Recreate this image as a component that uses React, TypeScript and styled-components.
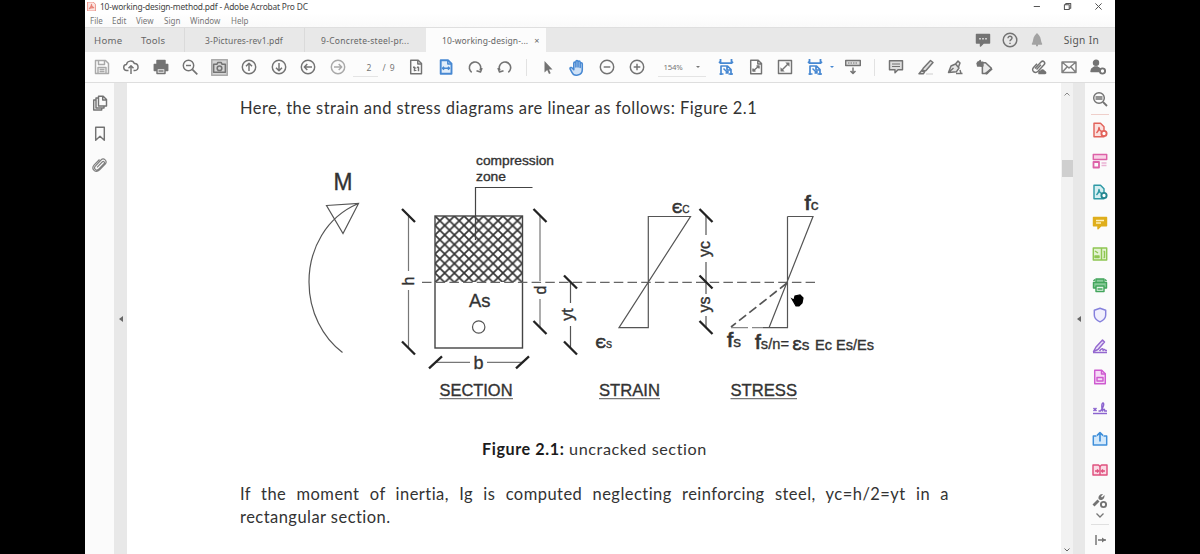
import React from "react";
import styled, { createGlobalStyle } from "styled-components";

const Global = createGlobalStyle`
  * { box-sizing: border-box; }
  body { margin: 0; background: #000; font-family: "Noto Sans", "Open Sans", sans-serif; }
`;

const GREY = "#737373";
const BLUE = "#4788d2";

const Screen = styled.div`
  display: flex;
  justify-content: center;
  width: 1200px;
  height: 554px;
  overflow: hidden;
  background: #000;
`;
const Window = styled.div`
  display: flex;
  flex-direction: column;
  width: 1030px;
  height: 554px;
  background: #fff;
`;
const TitleBar = styled.header`
  display: flex;
  align-items: center;
  height: 13px;
  padding: 0 11px 0 2px;
`;
const Title = styled.span`
  margin-left: 4px;
  font-size: 8.4px;
  letter-spacing: -0.18px;
  color: #444;
  white-space: nowrap;
  flex: 1;
`;
const WindowButtons = styled.div`
  display: flex;
  gap: 20px;
`;
const MenuBar = styled.nav`
  display: flex;
  height: 14px;
  padding-left: 5px;
  align-items: center;
  font-size: 8px;
  color: #777;
  background: linear-gradient(#fff, #fafafa);
`;
const MenuItem = styled.span<{ $w: number }>`
  width: ${(p) => p.$w}px;
  white-space: nowrap;
`;
const TabBar = styled.div`
  display: flex;
  height: 25px;
  background: #e8e8e8;
  border-top: 1px solid #dfdfdf;
`;
const Tab = styled.div<{ $w: number; $pad: number; $active?: boolean; $line?: boolean; $size?: number; $ls?: number }>`
  display: flex;
  align-items: center;
  width: ${(p) => p.$w}px;
  padding-left: ${(p) => p.$pad}px;
  font-size: ${(p) => p.$size ?? 8.5}px;
  letter-spacing: ${(p) => p.$ls ?? 0}px;
  color: #666;
  white-space: nowrap;
  background: ${(p) => (p.$active ? "#fcfcfc" : "transparent")};
  border-left: 1px solid ${(p) => (p.$line ? "#dadada" : "transparent")};
`;
const CloseMark = styled.span`
  margin-left: 6px;
  font-size: 9px;
`;
const Account = styled.div`
  display: flex;
  align-items: center;
  margin-left: auto;
  padding-right: 16px;
  font-size: 10.2px;
  letter-spacing: 0.3px;
  color: #555;
`;
const AccountSlot = styled.span<{ $w: number }>`
  display: flex;
  width: ${(p) => p.$w}px;
`;
const Toolbar = styled.div`
  display: flex;
  align-items: center;
  height: 31px;
  padding-left: 2px;
  background: #fcfcfc;
  border-bottom: 1px solid #dedede;
`;
const Slot = styled.span<{ $before?: number }>`
  display: flex;
  justify-content: center;
  flex: none;
  width: 29.5px;
  margin-left: ${(p) => p.$before ?? 0}px;
`;
const Divider = styled.span`
  width: 1px;
  height: 17px;
  margin: 0 6.5px;
  background: #e2e2e2;
`;
const PageBox = styled.span`
  display: flex;
  align-items: center;
  width: 49px;
  height: 19px;
  font-size: 8.5px;
  color: #777;
`;
const PageField = styled.span`
  width: 25px;
  height: 19px;
  padding-left: 14px;
  line-height: 19px;
  border-bottom: 1px solid #e4e4e4;
`;
const PageTotal = styled.span`
  margin-left: 5px;
  letter-spacing: 1px;
`;
const ZoomBox = styled.span`
  display: flex;
  align-items: center;
  justify-content: space-between;
  width: 48px;
  height: 19px;
  margin: 0 6px;
  padding: 0 6px 0 6px;
  font-size: 7.8px;
  letter-spacing: -0.2px;
  color: #777;
  border-bottom: 1px solid #e4e4e4;
`;
const Caret = styled.i<{ $c?: string }>`
  border: 2px solid transparent;
  border-top: 2.5px solid ${(p) => p.$c ?? "#777"};
  border-bottom: 0;
`;
const Workspace = styled.div`
  display: flex;
  flex: 1;
  min-height: 0;
`;
const NavPane = styled.aside`
  display: flex;
  flex-direction: column;
  align-items: center;
  gap: 15px;
  width: 29px;
  padding-top: 12px;
  background: #fbfbfb;
`;
const Rail = styled.div<{ $w: number }>`
  display: flex;
  align-items: center;
  justify-content: center;
  width: ${(p) => p.$w}px;
  background: #e8e8e8;
`;
const RailArrow = styled.i`
  border: 3px solid transparent;
  border-right: 4px solid #666;
  border-left: 0;
`;
const Page = styled.main`
  display: flex;
  flex-direction: column;
  flex: 1;
  padding: 13px 0 0 113px;
  font-family: Lato, sans-serif;
  color: #333;
`;
const Lead = styled.p`
  margin: 0;
  height: 24px;
  line-height: 24px;
  font-size: 16.5px;
  letter-spacing: 0.46px;
  white-space: nowrap;
`;
const Figure = styled.figure`
  display: flex;
  flex-direction: column;
  margin: 20px 0 0;
`;
const Caption = styled.figcaption`
  margin: 27px 0 0 242px;
  height: 24px;
  line-height: 24px;
  font-size: 16.2px;
  letter-spacing: 0.57px;
  white-space: nowrap;
  b { color: #1c1c1c; }
`;
const Paragraph = styled.p`
  width: 709px;
  margin: 22px 0 0;
  line-height: 23px;
  font-size: 16.5px;
  letter-spacing: 0.46px;
  text-align: justify;
`;
const ScrollTrack = styled.div`
  display: flex;
  flex-direction: column;
  align-items: center;
  justify-content: space-between;
  width: 12px;
  background: #f2f2f2;
  padding: 8px 0 1px;
`;
const Thumb = styled.div`
  width: 11px;
  height: 17px;
  margin: 63px 0 auto;
  background: #cfcfcf;
`;
const ToolPane = styled.aside`
  display: flex;
  flex-direction: column;
  align-items: center;
  width: 30px;
  background: #fbfbfb;
`;
const ToolCell = styled.span<{ $h?: number }>`
  display: flex;
  align-items: center;
  justify-content: center;
  flex: none;
  height: ${(p) => p.$h ?? 30.85}px;
`;
const Chevron = styled.svg`
  flex: none;
  margin: -4px 0 5px;
`;
const Rule = styled.span`
  flex: none;
  width: 18px;
  height: 1px;
  background: ${(p) => p.color ?? "#e0e0e0"};
`;

type IconProps = { c?: string; s?: number; children: React.ReactNode };
const Icon = ({ c = GREY, s = 16, children }: IconProps) => (
  <svg width={s} height={s} viewBox="0 0 16 16" fill="none" stroke={c} strokeWidth="1.45" strokeLinejoin="round">
    {children}
  </svg>
);
const Circled = ({ d, c }: { d: string; c?: string }) => (
  <Icon c={c}><circle cx="8" cy="8" r="6.7" /><path d={d} /></Icon>
);
const FitIcon = () => (
  <Icon c={BLUE}>
    <path d="M2.500 0V4.200h11V0M2.500 4.200L1 2.700M13.500 4.200L15 2.700" strokeWidth="1.800" />
    <path d="M3 16V7h6.500l3.500 3.500V16M9 7v4h4M1.500 15h4M10.500 15H15" strokeWidth="1.700" />
    <path d="M5.500 9.500L10 14M10 11.500V14H7.500" />
  </Icon>
);
const Gear = ({ x, y, c }: { x: number; y: number; c: string }) => (
  <circle cx={x} cy={y} r="2.6" stroke={c} strokeWidth="1.9" fill="#fff" />
);

const Tick = ({ x, y, up }: { x: number; y: number; up?: boolean }) => (
  <path d={up ? `M${x - 6.5} ${y + 6}L${x + 6.5} ${y - 6}` : `M${x - 6.5} ${y - 6.5}L${x + 6.5} ${y + 6.5}`} stroke="#222" strokeWidth="2.3" />
);
type LabelProps = { x: number; y: number; s: number; w?: number; t: string };
const Label = ({ x, y, s, w, t }: LabelProps) => (
  <text x={x} y={y} fontSize={s} textLength={w} lengthAdjust="spacingAndGlyphs" fill="#333" stroke="#333" strokeWidth="0.35">{t}</text>
);
type SymbolProps = { x: number; y: number; s: number; w: number; t: string; sub: string; subSize: number };
const Symbol = ({ x, y, s, w, t, sub, subSize }: SymbolProps) => (
  <text x={x} y={y} fontSize={s} textLength={w} lengthAdjust="spacingAndGlyphs" fill="#333" stroke="#333" strokeWidth="0.7">
    {t}<tspan fontSize={subSize} strokeWidth="0.3">{sub}</tspan>
  </text>
);
const Turned = ({ x, y, s, t }: { x: number; y: number; s: number; t: string }) => (
  <text transform={`translate(${x} ${y}) rotate(-90)`} fontSize={s} textAnchor="middle" fill="#333" stroke="#333" strokeWidth="0.4">{t}</text>
);

const Drawing = styled.svg`
  margin-left: 60px;
  font-family: "Liberation Sans", sans-serif;
`;

const Diagram = () => (
  <Drawing width="590" height="270" viewBox="300 140 590 270" fill="none" stroke="#555" strokeWidth="1.2">
    <defs>
      <pattern id="hatch" x="435" y="216" width="9.7" height="9.5" patternUnits="userSpaceOnUse">
        <path d="M0 0L9.7 9.5M9.7 0L0 9.5" stroke="#333" strokeWidth="1.7" />
      </pattern>
    </defs>
    <Label x={333.5} y={189.5} s={23.5} w={19} t="M" />
    <path d="M326.5 205.5L358.5 203.5L343 233.5ZM358.5 203.5C326 217 309 249 309 282C309 312 323 338 342.5 352.5" />

    <path d="M408.5 216V271M408.5 290V348" stroke="#777" />
    <Tick x={408.5} y={215.5} /><Tick x={408.5} y={348} />
    <Turned x={414} y={281} s={16} t="h" />

    <rect x="435" y="216" width="87.5" height="66" fill="url(#hatch)" stroke="none" />
    <rect x="435" y="216" width="87.5" height="132" stroke="#444" strokeWidth="1.4" />
    <path d="M475.5 240V187.5H532.5" stroke="#444" />
    <Label x={476} y={164.5} s={13} w={78} t="compression" />
    <Label x={476} y={181} s={13} w={30} t="zone" />
    <path d="M422 282.3H815" strokeDasharray="9.5 4.2" stroke="#666" />
    <Label x={469} y={306.5} s={19} w={21.5} t="As" />
    <circle cx="478.7" cy="327" r="6.2" />

    <path d="M540 216V281M540 299V328" stroke="#777" />
    <Tick x={540} y={215.5} /><Tick x={540} y={327.5} />
    <Turned x={546} y={290} s={16} t="d" />

    <path d="M570.5 282V303M570.5 326V348" />
    <Tick x={570.5} y={282} /><Tick x={570.5} y={348} />
    <Turned x={573} y={314.5} s={16} t="yt" />

    <path d="M435 362.3H470M487 362.3H523" stroke="#777" />
    <Tick x={435.5} y={362.3} up /><Tick x={522.5} y={362.3} up />
    <Label x={473.5} y={368.5} s={18} t="b" />

    <path d="M648.3 216.5H690.5L619 327.7H648.3Z" />
    <Symbol x={672} y={213} s={15.5} w={17.500} t="Є" sub="C" subSize={11} />
    <Symbol x={595.5} y={347.5} s={15.5} w={16.500} t="Є" sub="s" subSize={13} />

    <path d="M706 216V235M706 262V294M706 316V327" />
    <Tick x={706} y={215.5} /><Tick x={706} y={282} /><Tick x={706} y={327.5} />
    <Turned x={709.5} y={249} s={16} t="yc" />
    <Turned x={709.5} y={304.5} s={16} t="ys" />

    <path d="M787.5 216.5H813L769 327.7M787.5 216.5V327.7H763" />
    <path d="M787 283L731 327" strokeWidth="1.7" strokeDasharray="9 4" />
    <path d="M731 327.7H763" strokeDasharray="17 4" stroke="#888" />
    <Symbol x={804.5} y={210} s={20} w={14} t="f" sub="c" subSize={14} />
    <Symbol x={727} y={346.5} s={20} w={14} t="f" sub="s" subSize={14} />
    <Symbol x={755} y={349} s={20} w={34} t="f" sub="s/n=" subSize={14} />
    <Symbol x={792.5} y={349.5} s={15.500} w={17} t="Ɛ" sub="s" subSize={15.500} />
    <Label x={815} y={349.5} s={14.5} w={17} t="Ec" />
    <Label x={836} y={349.5} s={14.5} w={38} t="Es/Es" />
    <path d="M792 299l2 1 1-4 5-1 3 3-1 5-3 3h-3z" fill="#000" stroke="#000" />

    <Label x={439.5} y={395.7} s={16.4} w={73} t="SECTION" />
    <Label x={599} y={395.7} s={16.4} w={61} t="STRAIN" />
    <Label x={730.5} y={395.7} s={16.4} w={66.5} t="STRESS" />
    <path d="M439.5 398.7H513M599 398.7H660M730.5 398.7H797" stroke="#777" />
  </Drawing>
);

export default function App() {
  return (
    <>
      <Global />
      <Screen>
        <Window>
          <TitleBar>
            <Icon c="#e98378" s={9}><path d="M1 0h10l4 4v12H1z" fill="#fbe5e2" /><path d="M4 12c3-3 4-6 4-8 0 4 2 6 4 6-3 0-6 0-8 2z" strokeWidth="1.8" /></Icon>
            <Title>10-working-design-method.pdf - Adobe Acrobat Pro DC</Title>
            <WindowButtons>
              <Icon c="#555" s={11}><path d="M4 8h9" /></Icon>
              <Icon c="#555" s={11}><path d="M3.5 5.5h7v7h-7zM5.500 5.500V3.500h7.200v7.200h-2" strokeWidth="1.500" /></Icon>
              <Icon c="#555" s={11}><path d="M3.500 3.500l9 9M12.500 3.500l-9 9" /></Icon>
            </WindowButtons>
          </TitleBar>
          <MenuBar>
            <MenuItem $w={22}>File</MenuItem>
            <MenuItem $w={24}>Edit</MenuItem>
            <MenuItem $w={28}>View</MenuItem>
            <MenuItem $w={26}>Sign</MenuItem>
            <MenuItem $w={41}>Window</MenuItem>
            <MenuItem $w={20}>Help</MenuItem>
          </MenuBar>
          <TabBar>
            <Tab $w={47} $pad={8} $size={9.6} $ls={0.3}>Home</Tab>
            <Tab $w={52} $pad={8} $size={9.6} $ls={0.2}>Tools</Tab>
            <Tab $w={120} $pad={20} $line $ls={0.15}>3-Pictures-rev1.pdf</Tab>
            <Tab $w={122} $pad={16} $line $ls={0.28}>9-Concrete-steel-pr...</Tab>
            <Tab $w={120} $pad={15} $active $ls={0.1}>10-working-design-...<CloseMark>×</CloseMark></Tab>
            <Account>
              <AccountSlot $w={27}><Icon><path d="M1.500 2.500h13v8.500h-6l-3 3v-3h-4z" fill={GREY} /><path d="M4 6.700h8" stroke="#ccc" strokeDasharray="2 1" /></Icon></AccountSlot>
              <AccountSlot $w={27}><Icon><circle cx="8" cy="8" r="6.800" /><path d="M6 6.300c0-2.800 4-2.500 4-.2 0 1.500-2 1.500-2 3.200M8 10.700v1.300" /></Icon></AccountSlot>
              <AccountSlot $w={35}><Icon c="#a3a3a3"><path d="M3.500 12c1.500-1.500 1-6 2.500-7.500L8 2l2 2.500c1.500 1.500 1 6 2.500 7.500zM7 13.500h2" fill="#a3a3a3" /></Icon></AccountSlot>
              <span>Sign In</span>
            </Account>
          </TabBar>
          <Toolbar>
            <Slot><Icon c="#a9a9a9"><path d="M1.500 1.500h10l3 3v10h-13zM4.500 1.500v4h6v-4M4 14.500v-6h8v6M5.500 10.500h5M5.500 12.500h5" /></Icon></Slot>
            <Slot><Icon><path d="M5.500 11.500H4a3 3 0 0 1-.5-6C4 1.500 10 .8 11.300 4.500c4.700-.3 5 7 .7 7h-1.500M8 15V7M5.500 9.300L8 6.800l2.500 2.500" /></Icon></Slot>
            <Slot><Icon><path d="M4 1.500h8v3H4zM1.300 5.500h13.400v6H1.300z" fill={GREY} /><path d="M4 9.500h8v5H4z" fill="#eee" /><path d="M5.500 12h5" /></Icon></Slot>
            <Slot><Icon><circle cx="6.500" cy="6.500" r="5.200" /><path d="M10.300 10.300l5 5" strokeWidth="1.700" /><path d="M4 6.500h5" /></Icon></Slot>
            <Slot><Icon s={17}><path d="M.7.7h14.600v14.600H.7z" fill="#d5d5d5" stroke="#aaa" /><path d="M2.500 5h3l1-1.700h3L10.500 5h3v7.500h-11z" /><circle cx="8" cy="8.700" r="2.200" /></Icon></Slot>
            <Slot><Circled d="M8 12V4.500M5 7.300l3-3 3 3" /></Slot>
            <Slot><Circled d="M8 4v7.500M5 8.700l3 3 3-3" /></Slot>
            <Slot><Circled d="M12 8H4.500M7.300 5l-3 3 3 3" /></Slot>
            <Slot><Circled c="#a9a9a9" d="M4 8h7.500M8.700 5l3 3-3 3" /></Slot>
            <PageBox><PageField>2</PageField><PageTotal>/ 9</PageTotal></PageBox>
            <Slot><Icon><path d="M2.700 1.300h7.500l3.300 3.300v10.100H2.700z" /><path d="M9.800 1.300v3.700h3.700M5 8.300h1.500v4M9 8.300h1.500v4M7.700 8.500v1M7.700 11v1" /></Icon></Slot>
            <Slot><Icon c={BLUE}><path d="M2.700 1.300h7.500l3.300 3.300v10.100H2.700z" strokeWidth="1.900" fill="#e3eefa" /><path d="M9.800 1.300v3.700h3.700M4.500 9.300h7M6 7.800L4.500 9.300 6 10.800M10 7.800l1.500 1.500L10 10.800" /></Icon></Slot>
            <Slot><Icon><path d="M4.700 13.300A5.700 5.700 0 1 1 13 11.500M15 9l-1.500 4-4-1.300" strokeWidth="1.600" /></Icon></Slot>
            <Slot><Icon><path d="M11.300 13.300A5.700 5.700 0 1 0 3 11.500M1 9l1.500 4 4-1.300" strokeWidth="1.600" /></Icon></Slot>
            <Divider />
            <Slot><Icon><path d="M4.500 2v11.500l2.700-2.500 1.800 4 1.700-.8L9 10.400h3.500z" fill={GREY} stroke="none" /></Icon></Slot>
            <Slot><Icon c={BLUE} s={17}><path d="M4.500 10V4c0-1.400 2-1.400 2 0v3.500V2.500c0-1.500 2-1.500 2 0v5V3c0-1.400 2-1.400 2 0v5V4.500c0-1.400 2-1.400 2 0V10c0 6-8 6.500-9.500 3L1 9.300c-.3-1.300 1.300-1.700 2-.8z" fill="#cfe1f6" /></Icon></Slot>
            <Slot><Circled d="M4.700 8h6.600" /></Slot>
            <Slot><Circled d="M4.700 8h6.600M8 4.700v6.600" /></Slot>
            <ZoomBox>154%<Caret /></ZoomBox>
            <Slot><FitIcon /></Slot>
            <Slot><Icon><path d="M2.700 1.300h7.500l3.300 3.300v10.100H2.700zM9.800 1.300v3.700h3.700M5 12l6-5M5 9.500V12h2.500M8.500 7H11v2.500" /></Icon></Slot>
            <Slot><Icon><path d="M1.500 1.500h13v13h-13z" /><path d="M3.500 12.500V8.300l4.200 4.200zM12.500 3.500v4.200L8.300 3.500z" fill={GREY} stroke="none" /><path d="M5 11l6-6" /></Icon></Slot>
            <Slot><FitIcon /></Slot>
            <Caret $c={BLUE} />
            <Slot $before={4.5}><Icon><path d="M.7 1.500h14.600v5H.7z" fill="#ddd" /><path d="M3 4h10" strokeWidth="1" strokeDasharray="1.500 1" /><path d="M8 8.500V14M5.500 12L8 14.500l2.500-2.500" /></Icon></Slot>
            <Divider />
            <Slot><Icon><path d="M1.500 1.700h13v9h-4.500l-3 3v-3H1.500z" fill="#dedede" /><path d="M4 5h8M4 7.500h8" strokeWidth="1" /></Icon></Slot>
            <Slot><Icon><path d="M5 9.500l7.500-8 2.500 2-7 8-3.500.800zM4.500 10.500L1 14.700h4.500l1.500-2.500" fill="#ddd" /><path d="M8 15h7" stroke="#ddd" /></Icon></Slot>
            <Slot><Icon><path d="M1.500 13.500L4 7l4.500-2 3.500 4-2.500 3.700zM8.500 5L11 2l2 2-1.500 4M1.500 13.500L6.500 9M9 14.500h6.500M13 11l1 3.500" fill="#e6e6e6" /></Icon></Slot>
            <Slot><Icon s={17}><path d="M1 4.500l3-3v2h5l5.500 5.200-4 5H6V7L4 6z" fill="#eaeaea" /><path d="M1.500 3h5v3.500h-5z" fill={GREY} /><path d="M9 14l6-5" strokeWidth="2" /></Icon></Slot>
            <Slot $before={25}><Icon><path d="M4 9.500L10 3c2.200-2.200 5 .6 3 2.800L7 12.200c-3 3-7.300-.7-4.500-3.800L6 4.800M10 5.800L5.500 10.500" /><path d="M8 14.500c-.5-2 1-2.500 1.700-2.300.8-2 3.500-1.500 3.600.3 1.700 0 1.700 2 .7 2z" fill={GREY} /></Icon></Slot>
            <Slot><Icon c="#808080"><path d="M1 3h14v10.500H1zM1 3l7 6 7-6M1 13.500L6 8M15 13.500L10 8" /></Icon></Slot>
            <Slot><Icon><circle cx="6" cy="3.700" r="2.500" fill={GREY} /><path d="M1 12.500c0-3.500 2.500-3.500 3.500-4.500h3c.5 1 2 1 2.500 2v2.500z" fill={GREY} /><Gear x={12.5} y={12} c={GREY} /></Icon></Slot>
          </Toolbar>
          <Workspace>
            <NavPane>
              <Icon><path d="M6.500 1.300h4.700l3.300 3.200V11h-8zM10.700 1.300V5h3.800M6.500 3H4v10h8v-2M4 5H1.700v10h8v-2" /></Icon>
              <Icon><path d="M3.700 1.200h8.600v13L8 10.300l-4.300 3.900z" /></Icon>
              <Icon c="#808080"><path d="M5 10.300l5.200-5.300c1.500-1.300 3 .4 1.800 1.700L6.500 12.300c-2.300 2-5.300-.9-3.200-3.200L9 3c2.800-2.600 6.800 1 4.200 4l-5.600 5.900c-4 3.800-9-.9-5.400-5L7.500 2.500" strokeWidth="1.200" /></Icon>
            </NavPane>
            <Rail $w={13}><RailArrow /></Rail>
            <Page>
              <Lead>Here, the strain and stress diagrams are linear as follows: Figure 2.1</Lead>
              <Figure>
                <Diagram />
                <Caption><b>Figure 2.1:</b> uncracked section</Caption>
              </Figure>
              <Paragraph>
                If the moment of inertia, Ig is computed neglecting reinforcing steel, yc=h/2=yt in a rectangular section.
              </Paragraph>
            </Page>
            <ScrollTrack>
              <svg width="8" height="6" fill="none" stroke="#888"><path d="M1.500 4.500L4 2l2.500 2.500" /></svg>
              <Thumb />
              <svg width="8" height="6" fill="none" stroke="#666"><path d="M1.500 1.500L4 4l2.500-2.500" /></svg>
            </ScrollTrack>
            <Rail $w={12}><RailArrow /></Rail>
            <ToolPane>
              <ToolCell $h={31}><Icon><circle cx="7" cy="7" r="5.300" /><path d="M11 11l4 4" strokeWidth="1.800" /><path d="M3.500 6h7M3.500 8h7" /></Icon></ToolCell>
              <Rule color="#efcfca" />
              <ToolCell><Icon c="#e2635b"><path d="M2 1.300h6.500L12 4.800v9.900H2z" fill="#fbe1df" /><path d="M4.500 11c2-2 2.500-4 2.500-5.500 0 2.500 1.500 3.500 3 4" /><Gear x={12} y={11.5} c="#e2635b" /></Icon></ToolCell>
              <ToolCell><Icon c="#dd62a8"><path d="M1.300 1.500h13.400v5H1.300z" fill="#f8d3e7" /><path d="M1.500 9h5.500v5.500H1.500z" strokeWidth="1.800" /><path d="M9.500 10h5M9.500 12.500h5" stroke="#eab3d4" /></Icon></ToolCell>
              <ToolCell><Icon c="#2f9aa6"><path d="M2 1.300h6.500L12 4.800v9.900H2z" fill="#d6eff1" /><path d="M4.500 11c2-2 2.500-4 2.500-5.500 0 2.500 1.500 3.500 3 4" /><Gear x={12} y={11.5} c="#23858f" /></Icon></ToolCell>
              <ToolCell><Icon c="#dfae1c"><path d="M1.500 2.500h13v8.300H9l-3 3v-3H1.500z" fill="#dfae1c" /><path d="M4 5.500h8M4 8h5" stroke="#fff0b8" /></Icon></ToolCell>
              <ToolCell><Icon c="#8fc653"><path d="M1.300 2h13.400v12H1.300z" fill="#e4f3d3" /><path d="M9.500 2v12M11.500 5.500h1v6h-1M3 10h4v1.500H3zM3 5l3 2" /></Icon></ToolCell>
              <ToolCell><Icon c="#43a55c"><path d="M4 5.500V2h8v3.500M1.500 5.500h13V11h-13z" fill="#88cb99" /><path d="M4 9h8v5.500H4z" fill="#e3f4e7" /><path d="M1.500 4L3 2.500M14.500 4L13 2.500M5.500 12h5" /></Icon></ToolCell>
              <ToolCell><Icon c="#8580dc"><path d="M8 1.300l5.700 1.900V8c0 3.500-3 5.700-5.700 6.800C5.300 13.700 2.300 11.500 2.300 8V3.200z" fill="#f1f0fd" /></Icon></ToolCell>
              <ToolCell><Icon c="#9468cf"><path d="M4 9l6.500-7 2 2L6 11.500 1.500 13.500z" fill="#eae0f8" /><path d="M1 14.500h14M7.500 13c2-3 4-3 3.500-.5 1-1.500 2-1 2.500 0H15" /></Icon></ToolCell>
              <ToolCell><Icon c="#ce5bd0"><path d="M2.700 1.300h7l3.600 3.500v9.900H2.700z" fill="#f6d9f6" /><path d="M9.500 1.300V5h3.800M5 8.500h6v3.500H5z" /></Icon></ToolCell>
              <ToolCell><Icon c="#8b63cf"><path d="M1 13.500h14" /><path d="M1.500 8l3 3M4.500 8l-3 3M6.500 11h2c3-3 4-8 2.500-8s-1.500 5.500-.5 8c1-2.500 2.500-2.500 2 0h2.500" /></Icon></ToolCell>
              <ToolCell><Icon c="#3f8fda"><path d="M4.500 5H1.300v9h13.400V5h-3.200" fill="#d4e9fb" /><path d="M8 10.500V2M5 4.700L8 1.700l3 3" strokeWidth="1.700" /></Icon></ToolCell>
              <ToolCell><Icon c="#df527f"><path d="M1 3h5.500l1.500 1.500L9.500 3H15v10H1z" fill="#fadbe5" /><path d="M8 4.500V13M3 9h3.500M9.500 9H13M5 7.500L6.500 9 5 10.500M11 7.500L9.500 9l1.500 1.500" /></Icon></ToolCell>
              <ToolCell><Icon><path d="M1.500 12.500l5-5" strokeWidth="2.800" /><path d="M12.500 2L10 4.500l-1-1L11 1C7.500.5 5.500 4 7 6.500c2.500 1.500 6-.5 5.500-4.500z" fill={GREY} stroke="none" /><Gear x={11.5} y={11.5} c={GREY} /></Icon></ToolCell>
              <Chevron width="10" height="7" viewBox="0 0 10 7" fill="none" stroke="#777" strokeWidth="1.300"><path d="M1.500 1.500L5 5l3.500-3.500" /></Chevron>
              <Rule />
              <ToolCell $h={31}><Icon><path d="M4 3v10M6 8h8" /><path d="M10 5.500L13.500 8 10 10.500z" fill={GREY} stroke="none" /></Icon></ToolCell>
            </ToolPane>
          </Workspace>
        </Window>
      </Screen>
    </>
  );
}
